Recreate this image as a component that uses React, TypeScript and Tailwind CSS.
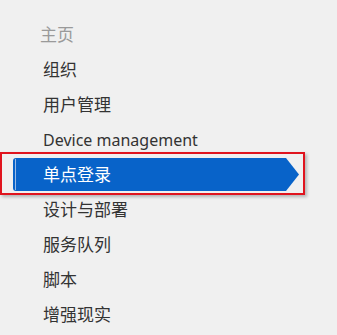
import React from "react";

const items = ["组织", "用户管理", "Device management", "单点登录", "设计与部署", "服务队列", "脚本", "增强现实"];

export default function App() {
  return (
    <div
      className="w-[337px] h-[335px] bg-[#f0f0f0] overflow-hidden"
      style={{ fontFamily: '"Segoe UI", "Noto Sans", "Noto Sans CJK SC", sans-serif' }}
    >
      <div className="flex flex-col pt-[17px]">
        <div className="h-[35px] flex items-center pl-[40px] text-[17px] text-[#9a9a9a]">主页</div>
        {items.map((t) =>
          t === "单点登录" ? (
            <div key={t} className="relative h-[35px] flex items-center">
              <div
                className="ml-[13px] w-[286px] h-[33px] bg-[#0863c9] rounded-l-[3px] flex items-center relative"
                style={{ clipPath: "polygon(0 0, calc(100% - 13px) 0, 100% 50%, calc(100% - 13px) 100%, 0 100%)" }}
              >
                <div className="absolute left-[2px] top-[1px] bottom-[1px] w-px bg-[#9bbbe6]" />
                <span className="pl-[30px] text-[17px] text-white">{t}</span>
              </div>
              <div className="absolute left-0 top-[-5px] w-[305px] h-[43px] border-2 border-[#e0141e] shadow-[2px_2px_3px_rgba(0,0,0,0.25)] pointer-events-none" />
            </div>
          ) : (
            <div
              key={t}
              className={
                t === "Device management"
                  ? "h-[35px] flex items-center pl-[43px] text-[16px] text-[#333333]"
                  : "h-[35px] flex items-center pl-[43px] text-[17px] text-[#333333]"
              }
            >
              {t}
            </div>
          )
        )}
      </div>
    </div>
  );
}
